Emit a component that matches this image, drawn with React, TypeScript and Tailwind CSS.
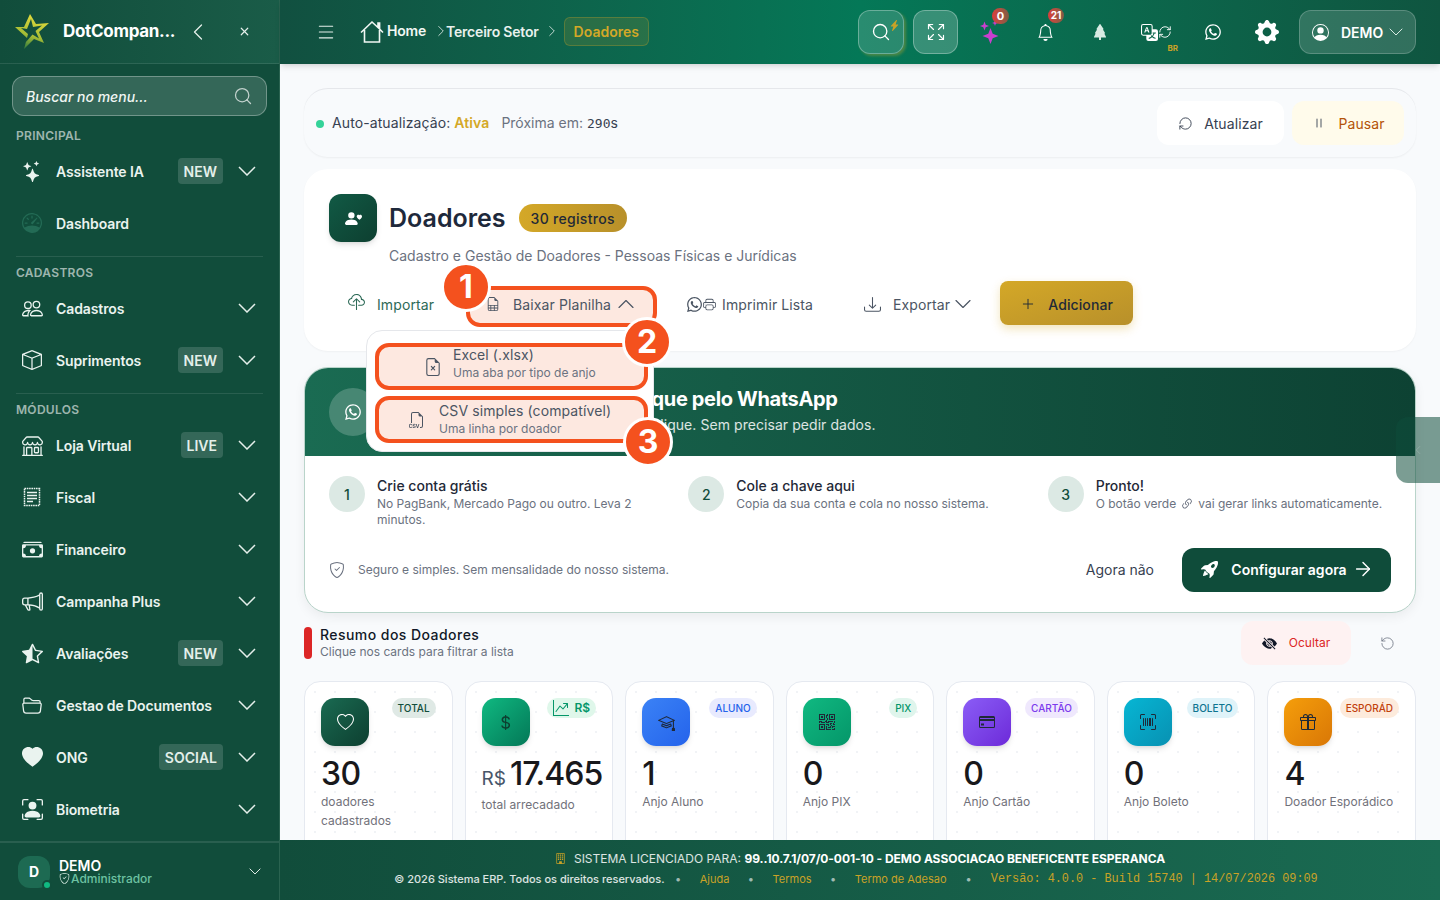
import React from 'react';
import {
  BsStars, BsSpeedometer, BsPeople, BsBox, BsShop, BsCashStack, BsMegaphone, BsStarHalf,
  BsFolder2Open, BsHeartFill, BsPersonBoundingBox, BsShieldCheck, BsGearFill, BsEyeSlashFill,
  BsBuilding, BsPersonCircle, BsBell, BsTreeFill, BsTranslate, BsRocketTakeoffFill, BsFiletypeCsv,
  BsFileEarmarkX, BsLightningChargeFill, BsPersonHeart, BsGraphUpArrow, BsHeart, BsCurrencyDollar,
  BsMortarboard, BsQrCode, BsUpcScan, BsGift, BsCloudUpload, BsDownload, BsLink45Deg,
  BsPrinter, BsFileEarmarkSpreadsheet, BsPause,
} from 'react-icons/bs';
import { FaWhatsapp } from 'react-icons/fa';
import { ChevronDown, ChevronLeft, ChevronRight, ChevronUp, X, Search, Menu, Expand, Plus, RotateCw, ArrowRight, RefreshCw } from 'lucide-react';

const FiscalIcon = ({ size = 20 }: { size?: number }) => (
  <svg width={size} height={size} viewBox="0 0 20 20" fill="none" stroke="currentColor">
    <rect x="2.5" y="1.5" width="15" height="17" strokeWidth="1.5" strokeDasharray="1.6 .7" />
    <path d="M5 5.5h10M5 8.5h10M5 11.5h10M5 14.5h6" strokeWidth="1.4" />
  </svg>
);

const Chevron = ({ w = 18, className = '' }: { w?: number; className?: string }) => (
  <svg width={w} height={w / 1.8} viewBox="0 0 18 10" fill="none" stroke="currentColor" strokeWidth={1.5} className={className}>
    <path d="M1 1l8 8 8-8" />
  </svg>
);

const CardIcon = () => (
  <svg width="16" height="14" viewBox="0 0 16 14" fill="#1f2937">
    <path d="M1.5 1h13A1.500 1.500 0 0 1 16 2.500v9a1.500 1.500 0 0 1-1.500 1.500h-13A1.500 1.500 0 0 1 0 11.500v-9A1.500 1.500 0 0 1 1.500 1zM1 6v5.500c0 .3.2.5.5.5h13c.3 0 .5-.2.5-.5V6zM1 3v1h14V3z" fillRule="evenodd" />
    <rect x="2" y="8.500" width="3" height="2" />
  </svg>
);

const SparkleTrio = () => (
  <svg width="24" height="24" viewBox="0 0 24 24" fill="#c93fcf">
    <path d="M13.5 8L15.700 13.800 21.500 16 15.700 18.200 13.500 24 11.300 18.200 5.500 16 11.300 13.800z" />
    <path d="M7.500 1.500L8.700 4.800 12 6 8.700 7.200 7.500 10.500 6.300 7.200 3 6 6.300 4.800z" />
    <path d="M18 0L18.800 2.200 21 3 18.800 3.800 18 6 17.200 3.800 15 3 17.200 2.200z" />
  </svg>
);

const Badge = ({ text }: { text: string }) => (
  <span className="h-[26px] px-1.5 flex items-center rounded bg-white/15 text-[14px] font-semibold text-[#e4efea]">{text}</span>
);

const Item = ({ icon, label, badge, arrow = true }: { icon: React.ReactNode; label: string; badge?: string; arrow?: boolean }) => (
  <div className="h-[52px] pl-[21px] pr-[23px] flex items-center text-[#eaf3ef]">
    <span className="w-[22px] flex justify-center shrink-0">{icon}</span>
    <span className="ml-[13px] flex-1 text-[14px] font-semibold tracking-[-0.1px] whitespace-nowrap">{label}</span>
    {badge && <Badge text={badge} />}
    {arrow && <Chevron className="ml-[15px] text-[#e4efea]" />}
  </div>
);

const SectionLabel = ({ text }: { text: string }) => (
  <div className="px-4 text-[12px] leading-4 font-semibold tracking-[0.3px] text-white/60">{text}</div>
);

const Sidebar = () => (
  <aside className="w-[280px] h-[900px] shrink-0 flex flex-col bg-[#114d3b] border-r border-[#2a6350]">
    <div className="h-[64px] shrink-0 flex items-center pl-3 pr-7 border-b border-white/10 bg-gradient-to-r from-[#114d3b] to-[#1a5c48]">
      <svg width="42" height="42" viewBox="12 11 42 42" className="shrink-0">
        <defs>
          <linearGradient id="logo" x1="0.6" y1="0" x2="0.3" y2="1">
            <stop offset="0" stopColor="#e6dc3c" />
            <stop offset="0.6" stopColor="#a6bd35" />
            <stop offset="1" stopColor="#2f7a3f" />
          </linearGradient>
        </defs>
        <path
          d="M30 14L36 24 49 23 39 32 44 43 34 39 24 49 27 38 15 27 24 27z M31 19L27 29 21 28 28 34 26 42 32.500 34.500 39 38.500 35.500 31 42 25.500 33 27z"
          fill="url(#logo)"
          fillRule="evenodd"
        />
      </svg>
      <span className="ml-[9px] flex-1 text-[17px] font-bold tracking-[-0.3px] text-white whitespace-nowrap">DotCompan...</span>
      <ChevronLeft size={28} strokeWidth={1.1} className="text-[#e4efea]" />
      <X size={13} strokeWidth={2.2} className="ml-[26px] text-[#e4efea]" />
    </div>
    <div className="mx-3 mt-3 h-10 shrink-0 flex items-center px-[13px] rounded-xl bg-white/15 border border-white/30">
      <span className="flex-1 text-[14px] italic font-medium text-[#f0f6f3]">Buscar no menu...</span>
      <Search size={20} strokeWidth={1.5} className="text-white/70" />
    </div>
    <div className="mt-3"><SectionLabel text="PRINCIPAL" /></div>
    <div className="mt-px">
      <Item icon={<BsStars size={21} />} label="Assistente IA" badge="NEW" />
      <Item icon={<BsSpeedometer size={20} className="text-[#236b55]" />} label="Dashboard" arrow={false} />
    </div>
    <div className="mx-4 mt-[7px] h-px bg-white/10" />
    <div className="mt-2"><SectionLabel text="CADASTROS" /></div>
    <div className="mt-px">
      <Item icon={<BsPeople size={21} />} label="Cadastros" />
      <Item icon={<BsBox size={20} />} label="Suprimentos" badge="NEW" />
    </div>
    <div className="mx-4 mt-[7px] h-px bg-white/10" />
    <div className="mt-2"><SectionLabel text="MÓDULOS" /></div>
    <div className="mt-px">
      <Item icon={<BsShop size={21} />} label="Loja Virtual" badge="LIVE" />
      <Item icon={<FiscalIcon />} label="Fiscal" />
      <Item icon={<BsCashStack size={21} />} label="Financeiro" />
      <Item icon={<BsMegaphone size={21} />} label="Campanha Plus" />
      <Item icon={<BsStarHalf size={21} />} label="Avaliações" badge="NEW" />
      <Item icon={<BsFolder2Open size={20} />} label="Gestao de Documentos" />
      <Item icon={<BsHeartFill size={21} />} label="ONG" badge="SOCIAL" />
      <Item icon={<BsPersonBoundingBox size={21} />} label="Biometria" />
    </div>
    <div className="mt-1.5 flex-1 flex items-center pl-[18px] pr-[18px] border-t-2 border-white/10">
      <div className="relative w-8 h-8 rounded-xl bg-[#1d6a52] flex items-center justify-center text-[14px] font-bold text-white">
        D
        <span className="absolute -right-[2px] -bottom-[2px] w-2.5 h-2.5 rounded-full bg-[#10b981] border-2 border-[#114d3b]" />
      </div>
      <div className="ml-[9px] flex-1 leading-none">
        <div className="text-[14px] leading-[13px] font-semibold text-white">DEMO</div>
        <div className="flex items-center gap-px text-[12px] leading-[13px] font-medium text-[#6dc2a2]">
          <BsShieldCheck size={11} className="text-[#d6ebe2]" />Administrador
        </div>
      </div>
      <Chevron w={12} className="text-[#e4efea]" />
    </div>
  </aside>
);

const Header = () => (
  <header className="relative z-10 h-[64px] shrink-0 flex items-center pl-[36px] pr-6 bg-gradient-to-r from-[#115040] via-[#047857] to-[#0f5540] shadow-md">
    <Menu size={20} strokeWidth={1.3} className="text-[#e4efea]" />
    <svg width="24" height="24" viewBox="0 0 24 24" fill="none" stroke="#f1f7f4" strokeWidth="1.6" className="ml-[24px]">
      <path d="M1 12.500L12 2l6 5.500V3h1.600v6L23 12.500M4.500 10v12h15V10" />
    </svg>
    <span className="ml-[3px] -mt-[4px] text-[14px] font-semibold text-[#f1f7f4] tracking-[-0.2px]">Home</span>
    <ChevronRight size={18} strokeWidth={1.1} className="ml-[6px] -mr-[4px] -mt-[2px] text-[#e4efea]" />
    <span className="-mt-[2px] text-[14px] font-semibold text-[#e8f1ed] tracking-[-0.2px] whitespace-nowrap">Terceiro Setor</span>
    <ChevronRight size={18} strokeWidth={1.1} className="ml-[4px] -mt-[2px] text-[#e4efea]" />
    <span className="ml-[3px] -mt-[2px] h-[29px] px-[9px] flex items-center rounded-md border border-[#c9a227]/30 bg-[#c9a227]/15 text-[14px] font-semibold text-[#d4a827]">Doadores</span>

    <div className="ml-auto flex items-center">
      <div className="relative w-[46px] h-11 rounded-xl bg-white/15 border border-white/30 flex items-center justify-center shadow-[2px_2px_3px_rgba(212,168,39,0.35)]">
        <Search size={20} strokeWidth={1.6} className="text-white" />
        <BsLightningChargeFill size={11} className="absolute right-[3px] top-[9px] text-[#c9a227]" />
      </div>
      <div className="ml-[9px] w-[45px] h-11 rounded-xl bg-white/20 border border-white/30 flex items-center justify-center">
        <Expand size={20} strokeWidth={1.4} className="text-white" />
      </div>
      <div className="relative ml-5 w-[22px] h-11 flex items-center justify-center">
        <span className="shrink-0"><SparkleTrio /></span>
        <span className="absolute -right-[9px] top-[-2px] w-[17px] h-4 rounded-full bg-gradient-to-r from-[#dc3b3b] to-[#7d5b45] text-[11px] font-bold text-white flex items-center justify-center">0</span>
      </div>
      <div className="relative ml-[36px] w-[18px] h-11 flex items-center justify-center">
        <BsBell size={17} className="text-white" />
        <span className="absolute -right-[10px] top-[-2px] w-[16px] h-[15px] rounded-full bg-gradient-to-r from-[#dc3b3b] to-[#7d5b45] text-[10px] font-bold text-white flex items-center justify-center">21</span>
      </div>
      <BsTreeFill size={16} className="ml-[38px] text-[#d8ebe3]" />
      <div className="relative ml-[33px] flex items-center">
        <BsTranslate size={17} className="text-white" />
        <RefreshCw size={14} strokeWidth={1.6} className="text-white" />
        <span className="absolute right-[-6px] top-[18px] text-[8px] font-bold text-[#c9a227]">BR</span>
      </div>
      <FaWhatsapp size={18} className="ml-[32px] text-white" />
      <BsGearFill size={24} className="ml-[33px] text-white" />
      <div className="ml-5 w-[117px] h-11 rounded-xl bg-white/15 border border-white/20 flex items-center pl-3 text-white">
        <BsPersonCircle size={17} />
        <span className="ml-[12px] text-[14px] font-semibold">DEMO</span>
        <ChevronDown size={24} strokeWidth={1} className="ml-[1px] text-[#d8ebe3]" />
      </div>
    </div>
  </header>
);

const Callout = ({ n, className }: { n: number; className: string }) => (
  <span className={`absolute z-40 w-[50px] h-[50px] rounded-full bg-[#f4511e] border-[3px] border-white flex items-center justify-center text-[32px] font-bold text-white ${className}`}>{n}</span>
);

const Step = ({ n, title, text }: { n: number; title: string; text: React.ReactNode }) => (
  <div className="flex gap-3">
    <span className="w-9 h-9 shrink-0 rounded-full bg-[#dce9e4] flex items-center justify-center text-[14px] font-medium text-[#114d3b]">{n}</span>
    <div>
      <div className="text-[14px] leading-5 font-medium text-[#1f2937]">{title}</div>
      <div className="text-[12px] leading-4 text-[#6b7280]">{text}</div>
    </div>
  </div>
);

const cards = [
  { icon: <BsHeart size={17} className="text-white" />, tag: 'TOTAL', tagC: 'bg-[#dfe9e5] text-[#114d3b]', bg: 'from-[#1a6b52] to-[#0d3f30]', value: '30', label: 'doadores cadastrados' },
  { icon: <BsCurrencyDollar size={17} className="text-[#0d3f30]" />, tag: 'R$', tagC: 'bg-[#dff7ea] text-[#059669]', bg: 'from-[#10b981] to-[#047857]', value: '17.465', label: 'total arrecadado', money: true },
  { icon: <BsMortarboard size={17} className="text-[#1f2937]" />, tag: 'ALUNO', tagC: 'bg-[#e8eafe] text-[#2563eb]', bg: 'from-[#3b82f6] to-[#2563eb]', value: '1', label: 'Anjo Aluno' },
  { icon: <BsQrCode size={16} className="text-[#1f2937]" />, tag: 'PIX', tagC: 'bg-[#dff5ec] text-[#059669]', bg: 'from-[#10b981] to-[#059669]', value: '0', label: 'Anjo PIX' },
  { icon: <CardIcon />, tag: 'CARTÃO', tagC: 'bg-[#efe8fd] text-[#7c3aed]', bg: 'from-[#8b5cf6] to-[#6d28d9]', value: '0', label: 'Anjo Cartão' },
  { icon: <BsUpcScan size={16} className="text-[#1f2937]" />, tag: 'BOLETO', tagC: 'bg-[#dff3f9] text-[#0e7490]', bg: 'from-[#06b6d4] to-[#0891b2]', value: '0', label: 'Anjo Boleto' },
  { icon: <BsGift size={16} className="text-[#1f2937]" />, tag: 'ESPORÁD', tagC: 'bg-[#fdebdc] text-[#c2410c]', bg: 'from-[#f59e0b] to-[#d97706]', value: '4', label: 'Doador Esporádico' },
];

const Content = () => (
  <main className="relative flex-1 min-h-0 overflow-hidden bg-[#f8fafc] px-6 pt-6">
    {/* auto refresh */}
    <div className="h-[69px] flex items-center justify-between pl-3 pr-3 rounded-3xl border-t border-[#e5e7eb] shadow-[0_1px_2px_rgba(0,0,0,0.05)]">
      <div className="flex items-baseline text-[14px] text-[#374151]">
        <span className="w-2 h-2 rounded-full bg-[#34d399]" />
        <span className="ml-2 tracking-[0.1px]">Auto-atualização:</span>
        <span className="ml-1 font-semibold tracking-[0.1px] text-[#d4a827]">Ativa</span>
        <span className="ml-3 text-[#6b7280]">Próxima em:</span>
        <span className="ml-1 text-[13px] text-[#374151] font-['DejaVu_Sans_Mono',monospace]">290</span>
        <span>s</span>
      </div>
      <div className="flex gap-2">
        <div className="w-[127px] h-11 rounded-xl bg-white flex items-center justify-center gap-[11px] text-[14px] tracking-[0.1px] text-[#374151]">
          <RotateCw size={15} strokeWidth={1.5} className="rotate-180" />Atualizar
        </div>
        <div className="w-[112px] h-11 rounded-xl bg-[#fffbeb] flex items-center justify-center gap-[11px] text-[14px] tracking-[0.1px] text-[#b45309]">
          <BsPause size={16} className="text-[#4b5563]" />Pausar
        </div>
      </div>
    </div>

    {/* title card */}
    <section className="mt-3 h-[182px] rounded-3xl bg-white shadow-[0_1px_2px_rgba(0,0,0,0.04)] pl-[25px] pt-[25px]">
      <div className="flex items-center">
        <div className="w-12 h-12 rounded-xl bg-gradient-to-br from-[#115a45] to-[#0d3f30] shadow-md flex items-center justify-center">
          <BsPersonHeart size={17} className="text-white" />
        </div>
        <h1 className="ml-3 pt-[2px] text-[25px] font-semibold text-[#1e293b]">Doadores</h1>
        <span className="ml-[13px] h-7 px-3 rounded-full bg-gradient-to-r from-[#d4a827] to-[#b8902a] flex items-center text-[14px] tracking-[0.3px] font-medium text-[#1f2937]">30 registros</span>
      </div>
      <p className="ml-[60px] mt-[4px] text-[14px] leading-5 text-[#6b7280]">Cadastro e Gestão de Doadores - Pessoas Físicas e Jurídicas</p>
      <div className="relative mt-[16px] h-11 flex items-center text-[14px] tracking-[0.1px] text-[#4b5563]">
        <div className="ml-[19px] flex items-center text-[#2d6a57]">
          <BsCloudUpload size={17} className="-mt-1" />
          <span className="ml-[12px]">Importar</span>
        </div>
        <div className="ml-[32px] mt-[4px] pb-[4px] w-[191px] h-[41px] rounded-[14px] border-[4px] border-[#f4511e] bg-[#fde8e0] flex items-center pl-[16px]">
          <BsFileEarmarkSpreadsheet size={14} />
          <span className="ml-[13px]">Baixar Planilha</span>
          <ChevronUp size={28} strokeWidth={1} className="ml-[1px]" />
        </div>
        <div className="ml-[29px] flex items-center">
          <FaWhatsapp size={17} />
          <BsPrinter size={13} />
          <span className="ml-[6px]">Imprimir Lista</span>
        </div>
        <div className="ml-[51px] flex items-center">
          <BsDownload size={17} />
          <span className="ml-[12px]">Exportar</span>
          <ChevronDown size={28} strokeWidth={1} className="-ml-px" />
        </div>
        <div className="ml-[23px] -mt-[2px] pt-[2px] w-[133px] h-11 rounded-lg bg-gradient-to-br from-[#d4a827] to-[#b8902a] shadow-[0_4px_10px_rgba(212,168,39,0.3)] flex items-center justify-center gap-3 font-medium text-[#1f2937]">
          <Plus size={16} strokeWidth={1.4} />Adicionar
        </div>
      </div>
    </section>

    {/* whatsapp banner */}
    <section className="mt-4 h-[246px] rounded-3xl border border-[#b9d4ca] bg-white overflow-hidden shadow-[0_4px_12px_rgba(0,0,0,0.06)] flex flex-col">
      <div className="h-[88px] shrink-0 flex items-center pl-6 bg-gradient-to-r from-[#1a6b52] to-[#0d4233]">
        <div className="w-12 h-12 rounded-full bg-white/20 flex items-center justify-center">
          <FaWhatsapp size={18} className="text-white" />
        </div>
        <div className="ml-3 -mt-[4px]">
          <div className="text-[20px] leading-7 font-bold text-white tracking-[-0.35px] whitespace-nowrap">Receba doações com um clique pelo WhatsApp</div>
          <div className="text-[14px] leading-5 text-white/85 tracking-[0.06px] whitespace-nowrap mt-[2px]">O doador recebe o link e paga com um clique. Sem precisar pedir dados.</div>
        </div>
      </div>
      <div className="grid grid-cols-3 gap-4 px-6 mt-5">
        <Step n={1} title="Crie conta grátis" text="No PagBank, Mercado Pago ou outro. Leva 2 minutos." />
        <Step n={2} title="Cole a chave aqui" text="Copia da sua conta e cola no nosso sistema." />
        <Step n={3} title="Pronto!" text={<span className="inline-flex items-center gap-1 whitespace-nowrap">O botão verde <BsLink45Deg size={14} /> vai gerar links automaticamente.</span>} />
      </div>
      <div className="mt-auto mb-5 flex items-center px-6">
        <BsShieldCheck size={16} className="text-[#6b7280]" />
        <span className="ml-[13px] text-[12px] text-[#6b7280]">Seguro e simples. Sem mensalidade do nosso sistema.</span>
        <span className="ml-auto -mt-[2px] text-[14px] text-[#374151]">Agora não</span>
        <div className="ml-7 w-[209px] h-11 rounded-xl bg-[#0f4c3a] flex items-center justify-center pl-[2px] pb-[2px] text-[14px] font-semibold text-white">
          <BsRocketTakeoffFill size={17} className="mr-[13px]" />Configurar agora<ArrowRight size={22} strokeWidth={1.6} className="ml-[5px]" />
        </div>
      </div>
    </section>

    {/* summary */}
    <div className="mt-2 h-11 flex items-center">
      <span className="w-2 h-8 rounded bg-[#dc2626]" />
      <div className="ml-2">
        <div className="text-[14px] leading-[18px] font-medium tracking-[0.45px] text-[#111827]">Resumo dos Doadores</div>
        <div className="text-[12px] leading-4 text-[#6b7280]">Clique nos cards para filtrar a lista</div>
      </div>
      <div className="ml-auto w-[110px] h-11 rounded-xl bg-[#fef2f2] flex items-center justify-center gap-3 text-[12px] text-[#dc2626]">
        <BsEyeSlashFill size={15} className="text-[#111827]" />Ocultar
      </div>
      <RotateCw size={15} strokeWidth={1.3} className="ml-[29px] mr-[21px] text-[#6b7280] -scale-x-100" />
    </div>

    <div className="mt-4 grid grid-cols-7 gap-3">
      {cards.map((c) => (
        <div key={c.tag} className="h-[200px] rounded-2xl bg-white bg-[radial-gradient(#f1f3f6_1px,transparent_1px)] bg-[length:20px_20px] border border-[#e5e9f0] pl-4 pr-4 pt-4">
          <div className="flex justify-between items-start">
            <div className={`w-12 h-12 rounded-[14px] bg-gradient-to-br ${c.bg} shadow-md flex items-center justify-center`}>{c.icon}</div>
            <span className={c.money
              ? `h-5 px-1.5 rounded-full flex items-center gap-1.5 text-[12px] font-semibold ${c.tagC}`
              : `h-5 px-1.5 rounded-full flex items-center gap-1.5 text-[10px] font-medium ${c.tagC}`}>
              {c.money && <BsGraphUpArrow size={16} />}{c.tag}
            </span>
          </div>
          <div className={c.money
            ? 'mt-2 text-[32px] leading-10 font-medium tracking-[-1px] text-[#18181b] whitespace-nowrap'
            : 'mt-2 text-[32px] leading-10 font-medium tracking-[-0.5px] text-[#18181b] whitespace-nowrap'}>
            {c.money && <span className="text-[19px] leading-none font-normal tracking-normal text-[#475569] mr-1">R$</span>}{c.value}
          </div>
          <div className={`text-[12px] leading-[19px] text-[#71717a] ${c.money ? 'mt-px' : '-mt-[2px]'}`}>{c.label}</div>
        </div>
      ))}
    </div>

    {/* side tab */}
    <div className="absolute right-0 top-[353px] w-[44px] h-[66px] rounded-l-xl bg-[#0f4c3a]/55 flex items-center justify-center z-20">
      <ChevronLeft size={14} strokeWidth={1} className="text-white/30" />
    </div>

    {/* dropdown */}
    <div className="absolute z-30 left-[86px] top-[266px] w-[288px] h-[122px] rounded-2xl bg-white border border-[#e5e7eb] pl-2 pr-[5px] pt-3 flex flex-col gap-[6px]">
      <div className="h-[47px] shrink-0 rounded-[14px] border-[4px] border-[#f4511e] bg-[#fde8e0] flex items-center pl-[45px] text-[#4b5563]">
        <BsFileEarmarkX size={18} />
        <div className="ml-[11px] -mt-[7px]">
          <div className="text-[14px] leading-5 tracking-[0.1px]">Excel (.xlsx)</div>
          <div className="text-[12px] leading-4 text-[#6b7280]">Uma aba por tipo de anjo</div>
        </div>
      </div>
      <div className="h-[47px] shrink-0 rounded-[14px] border-[4px] border-[#f4511e] bg-[#fde8e0] flex items-center pl-[30px] text-[#4b5563]">
        <BsFiletypeCsv size={16} />
        <div className="ml-[14px] -mt-[2px]">
          <div className="text-[14px] leading-5 tracking-[0.1px]">CSV simples (compatível)</div>
          <div className="text-[12px] leading-4 text-[#6b7280]">Uma linha por doador</div>
        </div>
      </div>
    </div>

    <Callout n={1} className="left-[161px] top-[198px]" />
    <Callout n={2} className="left-[342px] top-[253px]" />
    <Callout n={3} className="left-[343px] top-[353px]" />
  </main>
);

const Dot = ({ className }: { className: string }) => <span className={`text-white/60 ${className}`}>•</span>;

const Footer = () => (
  <footer className="relative z-10 h-[60px] shrink-0 flex flex-col items-center justify-center gap-1 pb-[3px] bg-gradient-to-r from-[#114d3b] to-[#1a6b52] text-white/85">
    <div className="flex items-center text-[12px] leading-4">
      <BsBuilding size={11} className="text-[#c9a227] mr-2" />
      SISTEMA LICENCIADO PARA:&nbsp;<span className="font-bold text-white tracking-[-0.05px]">99..10.7.1/07/0-001-10 - DEMO ASSOCIACAO BENEFICENTE ESPERANCA</span>
    </div>
    <div className="flex items-center pr-2 text-[11px] leading-4">
      <span className="font-medium">© 2026 Sistema ERP. Todos os direitos reservados.</span>
      <Dot className="ml-[10.5px] mr-[18.5px]" />
      <span className="text-[#c9a227]">Ajuda</span>
      <Dot className="mx-[18.5px]" />
      <span className="text-[#c9a227]">Termos</span>
      <Dot className="mx-[18.5px]" />
      <span className="text-[#c9a227]">Termo de Adesao</span>
      <Dot className="mx-[19px]" />
      <span className="text-[#c9a227] text-[11.85px] font-['Liberation_Mono',monospace]">Versão: 4.0.0 - Build 15740 | 14/07/2026 09:09</span>
    </div>
  </footer>
);

export default function App() {
  return (
    <div className="w-[1440px] h-[900px] flex overflow-hidden font-['Inter',sans-serif]">
      <Sidebar />
      <div className="flex-1 min-w-0 flex flex-col">
        <Header />
        <Content />
        <Footer />
      </div>
    </div>
  );
}
